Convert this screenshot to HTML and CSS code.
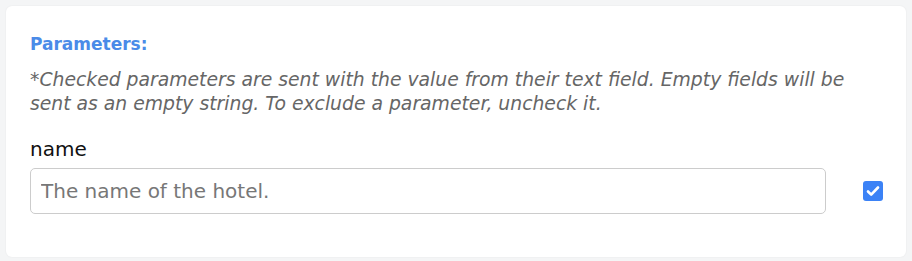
FILE: index.html
```html
<!DOCTYPE html>
<html lang="en">
<head>
  <meta charset="UTF-8">
  <title>Parameters</title>
  <link rel="stylesheet" href="styles.css">
</head>
<body>
  <div class="panel">
    <h3 class="panel-title">Parameters:</h3>
    <p class="hint">*Checked parameters are sent with the value from their text field. Empty fields will be sent as an empty string. To exclude a parameter, uncheck it.</p>
    <div class="param">
      <label class="param-name" for="p-name">name</label>
      <div class="param-row">
        <input type="text" id="p-name" class="param-input" placeholder="The name of the hotel.">
        <span class="check">
          <svg width="20" height="20" viewBox="0 0 20 20">
            <rect width="20" height="20" rx="3" fill="#3b82f6"/>
            <path d="M5 10.5l3.2 3.2L15 6.5" fill="none" stroke="#fff" stroke-width="2.6" stroke-linecap="round" stroke-linejoin="round"/>
          </svg>
        </span>
      </div>
    </div>
  </div>
</body>
</html>
```

FILE: styles.css
```css
body { margin: 0; background: #f4f5f6; font-family: 'DejaVu Sans', sans-serif; padding: 6px; }
.panel { background: #fff; border-radius: 6px; padding: 28px 23px 43px 24px; box-shadow: 0 0 2px #0001; }
.panel-title { margin: 0 0 14px 0; font-size: 17px; font-weight: bold; color: #4a8be8; line-height: 20px; }
.hint { margin: 0 0 20px 0; max-width: 830px; font-size: 18.8px; font-style: italic; color: #666; line-height: 24px; }
.param-name { display: block; font-size: 20px; color: #111; line-height: 26px; margin-bottom: 6px; }
.param-row { display: flex; align-items: center; gap: 37px; }
.param-input { flex: 1; height: 46px; box-sizing: border-box; border: 1px solid #ccc; border-radius: 5px; padding: 0 10px; font-size: 20px; font-family: inherit; color: #333; }
.param-input::placeholder { color: #777; }
.check { display: flex; width: 20px; height: 20px; }
```
